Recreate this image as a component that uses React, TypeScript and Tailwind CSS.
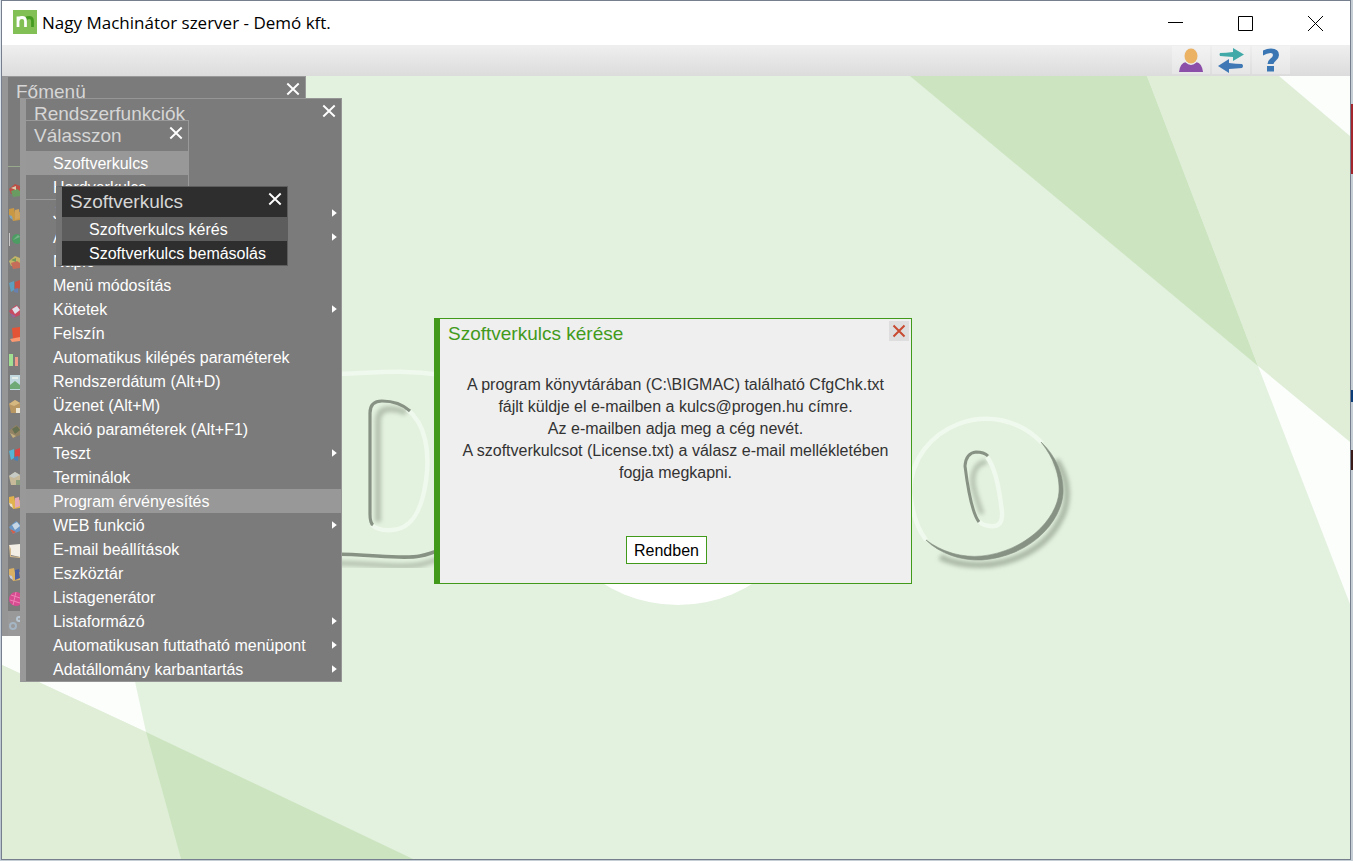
import React from "react";

type Item = { label: string; sub?: boolean; active?: boolean };

const systemItems: Item[] = [
  { label: "Jogosultságok", sub: true },
  { label: "Adatmentés", sub: true },
  { label: "Napló" },
  { label: "Menü módosítás" },
  { label: "Kötetek", sub: true },
  { label: "Felszín" },
  { label: "Automatikus kilépés paraméterek" },
  { label: "Rendszerdátum (Alt+D)" },
  { label: "Üzenet (Alt+M)" },
  { label: "Akció paraméterek (Alt+F1)" },
  { label: "Teszt", sub: true },
  { label: "Terminálok" },
  { label: "Program érvényesítés", active: true },
  { label: "WEB funkció", sub: true },
  { label: "E-mail beállítások" },
  { label: "Eszköztár" },
  { label: "Listagenerátor" },
  { label: "Listaformázó", sub: true },
  { label: "Automatikusan futtatható menüpont", sub: true },
  { label: "Adatállomány karbantartás", sub: true },
];

function CloseIcon() {
  return (
    <svg width="14" height="14" viewBox="0 0 14 14" fill="none" stroke="white" strokeWidth="1.9" aria-hidden="true">
      <path d="M1.3 1.5 12.7 12.5M12.7 1.5 1.3 12.5" />
    </svg>
  );
}

function MenuHeader({ title }: { title: string }) {
  return (
    <header className="flex h-[30px] items-start justify-between pr-[5px] pl-2 text-[19px] leading-[30px] text-[#d6d6d6]">
      <h2>{title}</h2>
      <button type="button" aria-label={`${title} bezárása`} className="mt-[5px] flex">
        <CloseIcon />
      </button>
    </header>
  );
}

function MenuRow({ item, tone }: { item: Item; tone?: string }) {
  return (
    <li>
      <button
        type="button"
        className={`flex h-6 w-full items-center justify-between pr-1 pl-[27px] text-left text-base leading-6 whitespace-nowrap text-white ${tone ?? (item.active ? "bg-[#989898]" : "")}`}
      >
        <span className="pt-[2px]">{item.label}</span>
        {item.sub && (
          <svg width="5" height="8" viewBox="0 0 5 8" fill="white" aria-hidden="true">
            <path d="M0 0.3 4.8 4 0 7.7Z" />
          </svg>
        )}
      </button>
    </li>
  );
}

function Wallpaper() {
  return (
    <svg className="absolute inset-0 h-full w-full" viewBox="0 0 1348 783" preserveAspectRatio="none" aria-hidden="true">
      <defs>
        <filter id="soft" x="-20%" y="-20%" width="140%" height="140%">
          <feGaussianBlur stdDeviation="2.2" />
        </filter>
      </defs>
      <rect width="1348" height="783" fill="#e3f1df" />
      <path d="M908 0H1145L1256 290Z" fill="#cce5c0" />
      <path d="M1145 0H1277L1348 60V366L1256 290Z" fill="#e0eed8" />
      <path d="M1277 0H1348V60Z" fill="#fbfefb" />
      <path d="M1256 290 1348 366V528Z" fill="#fcfefc" />
      <path d="M0 500H110L144 656 0 589Z" fill="#fcfefb" />
      <path d="M0 589 144 656 179 783H0Z" fill="#e0eed8" />
      <path d="M144 656 411 783H179Z" fill="#cce5c0" />
      <circle cx="676" cy="387" r="142" fill="white" />

      <g fill="none">
        <path d="M330 487C370 487 400 493 421 488Q432 485 445 480" stroke="#b3c1ae" strokeWidth="5" filter="url(#soft)" />
        <path d="M330 298C370 297 400 293 440 299" stroke="#f0f9ed" strokeWidth="4.5" />
        <path d="M330 478C370 478 400 484 418 480Q428 478 440 473" stroke="#879284" strokeWidth="3.6" />
        <path d="M376 446V346Q376 333 387 333Q398 333 404 337" stroke="#b3c1ae" strokeWidth="6" filter="url(#soft)" />
        <path d="M405 333C424 348 428 376 424 405C419 440 407 453 390 454Q376 455 370 449" stroke="#f0f9ed" strokeWidth="4.5" />
        <path d="M371 449Q368 447 368 438V337Q368 325 380 325Q397 325 408 335" stroke="#879284" strokeWidth="3.2" />

        <path d="M1054 384C1068 404 1068 428 1057 446C1042 474 1008 489 978 489C960 489 948 486 938 481" stroke="#a9b7a4" strokeWidth="6" filter="url(#soft)" />
        <path d="M1040 367C992 317 909 350 908 416Q911 447 924 464" stroke="#f0f9ed" strokeWidth="4.5" />
        <path d="M1039 366C1056 382 1062 402 1061 418C1059 445 1030 480 980 484C960 485 938 478 924 464C940 476 960 482 980 480C1024 475 1055 443 1057 416C1058 400 1052 382 1039 366Z" fill="#879284" stroke="#879284" strokeWidth=".6" />
        <path d="M980 438C972 416 968 404 973 394Q977 386 985 386" stroke="#b3c1ae" strokeWidth="5" filter="url(#soft)" />
        <path d="M985 381C994 392 998 418 1000 436Q1001 452 988 450Q979 449 977 445" stroke="#f0f9ed" strokeWidth="4.5" />
        <path d="M977 446C970 437 965 406 963 390Q964 377 974 376Q982 376 986 380" stroke="#879284" strokeWidth="3" />
      </g>
    </svg>
  );
}

function MainMenuIcons() {
  const tints: [string, string, string][] = [
    ["#bd4e46", "#6a9c62", "#d7cbb0"],
    ["#c99845", "#d0a35c", "#7da3bd"],
    ["#c8c8c8", "#4d9c63", "#79b18a"],
    ["#c4b568", "#c66d5a", "#72985c"],
    ["#5e9fc0", "#c95245", "#6780ad"],
    ["#c74b61", "#dde0e8", "#8c6b9a"],
    ["#f0805d", "#e35436", "#fa9871"],
    ["#a1e092", "#ef9b89", "#9bd88c"],
    ["#c2d8df", "#6ea976", "#e6eeea"],
    ["#b99763", "#d5b780", "#eee6d5"],
    ["#938365", "#667052", "#c0ad80"],
    ["#56b5d6", "#d94444", "#477fb6"],
    ["#c6ba9a", "#c6cbc5", "#899f7d"],
    ["#e0b34e", "#e3a8b5", "#eee2cd"],
    ["#6996c4", "#c6d6e5", "#d45f47"],
    ["#e5d7b5", "#f2eee5", "#d4b98c"],
    ["#d9b064", "#4c5f9d", "#c7cbe0"],
    ["#d74b91", "#c04583", "#ee83b5"],
    ["#a5b5c3", "#909eb0", "#b7c6d2"],
  ];
  const kinds = [0, 1, 2, 0, 3, 4, 5, 6, 7, 8, 4, 3, 8, 1, 4, 11, 1, 9, 10];
  return (
    <ul className="absolute top-[102px] left-0 flex flex-col">
      {tints.map(([a, b, c], i) => (
        <li key={i} className="h-6">
          <svg width="12" height="24" viewBox="0 0 12 24" aria-hidden="true">
            {kinds[i] === 0 && <><path d="M1 10 7 5 12 7V12L3 15Z" fill={a} /><path d="M3 12 9 10 12 12V17L5 18Z" fill={b} /><path d="M3 9 8 7V11Z" fill={c} /></>}
            {kinds[i] === 1 && <><path d="M1 6 6 5 7 10 12 9V17L5 18 3 13 1 12Z" fill={a} /><path d="M7 7 11 6 12 15 7 17Z" fill={b} /><path d="M1 12 4 13 5 17 2 15Z" fill={c} /></>}
            {kinds[i] === 2 && <><path d="M1 6H2V19H1Z" fill={a} /><circle cx="9" cy="12" r="5" fill={b} /><path d="M5 13 10 8 12 10Z" fill={c} /></>}
            {kinds[i] === 3 && <><path d="M1 8 6 6V15L3 17Z" fill={a} /><path d="M7 7 12 5V13L7 15Z" fill={b} /><path d="M6 14 10 13V18L6 17Z" fill={c} /></>}
            {kinds[i] === 4 && <><path d="M1 12 8 6 12 9V16L5 19Z" fill={a} /><path d="M4 10 9 7 12 11 7 15Z" fill={b} /><path d="M2 14 8 17 5 19Z" fill={c} /></>}
            {kinds[i] === 5 && <><path d="M4 5 12 4V16H5Z" fill={b} /><path d="M2 16 12 14V18L4 19Z" fill={c} /></>}
            {kinds[i] === 6 && <><path d="M1 7H5V19H1Z" fill={a} /><path d="M7 10H10V19H7Z" fill={b} /></>}
            {kinds[i] === 7 && <><path d="M2 4H12V19H2Z" fill={a} /><path d="M2 14 7 10 12 14V18H2Z" fill={b} /><path d="M4 6H10V8H4Z" fill={c} /></>}
            {kinds[i] === 8 && <><path d="M1 9 7 5 12 8V18L3 18Z" fill={a} /><path d="M1 9 6 11 12 8 7 5Z" fill={b} /><path d="M8 13H12V18H8Z" fill={c} /></>}
            {kinds[i] === 9 && <><circle cx="8" cy="12" r="7" fill={a} /><path d="M3 8 12 11M2 13 12 16M8 5 5 18" stroke={c} fill="none" /></>}
            {kinds[i] === 10 && <><circle cx="5" cy="15" r="3" stroke={a} strokeWidth="2" fill="none" /><circle cx="11" cy="8" r="2" stroke={c} strokeWidth="2" fill="none" /></>}
            {kinds[i] === 11 && <><path d="M1 6 12 5V18L3 16Z" fill={b} /><path d="M1 6 3 10V17L12 18V19L2 18Z" fill={c} /></>}
          </svg>
        </li>
      ))}
    </ul>
  );
}

export default function App() {
  return (
    <div className="flex h-screen min-h-[720px] overflow-hidden bg-[#c5ced5] pb-px font-['Liberation_Sans',Arial,sans-serif]">
      <div className="w-px shrink-0 bg-linear-to-b from-[#dfe6ee] to-[#b9c4d0]" />
      <div className="flex min-w-0 flex-1 flex-col border border-[#757f8d] bg-white">
        <header className="flex h-11 shrink-0 items-center justify-between pl-[11px]">
          <div className="flex items-center gap-[5px]">
            <svg width="24" height="24" viewBox="0 0 24 24" fill="none" className="-translate-y-px" aria-hidden="true">
              <path d="M0 0H24V24H0Z" fill="#82bf55" />
              <path d="M12.500 17V11Q12.500 7.500 16 7.500Q19.500 7.500 19.500 11V17" stroke="#459b22" strokeWidth="2.800" />
              <path d="M5 17V6.500M5 11Q5.500 7.500 9 7.500Q12.500 7.500 12.500 11V17" stroke="white" strokeWidth="2.800" />
            </svg>
            <h1 className="font-['Open_Sans','Noto_Sans',sans-serif] text-[17px] leading-6 text-black">Nagy Machinátor szerver - Demó kft.</h1>
          </div>
          <div className="flex">
            <button type="button" aria-label="Kis méret" className="flex h-11 w-[70px] items-center justify-center">
              <svg width="15" height="15" viewBox="0 0 15 15" stroke="black" aria-hidden="true"><path d="M0 6.5H15" /></svg>
            </button>
            <button type="button" aria-label="Teljes méret" className="flex h-11 w-[70px] items-center justify-center">
              <svg width="15" height="15" viewBox="0 0 15 15" stroke="black" fill="none" aria-hidden="true"><path d="M.5.5H14.5V14.5H.5Z" /></svg>
            </button>
            <button type="button" aria-label="Bezárás" className="flex h-11 w-[70px] items-center justify-center">
              <svg width="15" height="15" viewBox="0 0 15 15" stroke="black" aria-hidden="true"><path d="M0 0 15 15M15 0 0 15" /></svg>
            </button>
          </div>
        </header>

        <div className="flex h-[31px] shrink-0 justify-end gap-[2px] bg-linear-to-b from-[#efefef] to-[#dcdcdc] pt-px pr-[60px]">
          <button type="button" aria-label="Felhasználó" className="flex h-7 w-[38px] items-center justify-center bg-linear-to-b from-[#f3f3f3] to-[#e6e6e6]">
            <svg width="24" height="24" viewBox="0 0 24 24" aria-hidden="true">
              <path d="M0 24Q1 15 7 14H17Q23 15 24 24Z" fill="#8b4ea9" />
              <ellipse cx="12" cy="8.500" rx="7.500" ry="8.500" fill="#ececec" />
              <ellipse cx="12" cy="8" rx="6.500" ry="7.500" fill="#ebb263" />
            </svg>
          </button>
          <button type="button" aria-label="Adatcsere" className="flex h-7 w-[38px] items-center justify-center bg-linear-to-b from-[#f3f3f3] to-[#e6e6e6]">
            <svg width="26" height="26" viewBox="0 0 26 26" aria-hidden="true">
              <path d="M2 6Q8 6 15 5V1L26 7.5 15 14V10Q8 9.500 2 9Q1 7.500 2 6Z" fill="#41aaa8" />
              <path d="M24 17Q18 17 11 16V12L0 19 11 26V22Q18 21.500 24 21Q26 19 24 17Z" fill="#3f78b5" />
            </svg>
          </button>
          <button type="button" aria-label="Súgó" className="flex h-7 w-[38px] items-center justify-center bg-linear-to-b from-[#f3f3f3] to-[#e6e6e6]">
            <svg width="18" height="24" viewBox="0 0 18 24" aria-hidden="true">
              <path d="M1 2.500Q5 .5 9 .5Q17 .5 17 7Q17 10 14 12.500Q11.500 14.500 11.500 16H5.500Q5.500 13 8 11Q11 9 11 7Q11 5 8.500 5Q5 5 1 7.500ZM5 18H12V23.500H5Z" fill="#3b76b4" />
            </svg>
          </button>
        </div>

        <main className="relative min-h-0 flex-1 overflow-hidden">
          <Wallpaper />

          <section aria-label="Főmenü" className="absolute top-0 left-0 h-[560px] w-[304px] border-t border-r border-[#999] border-l-[6px] border-l-[#969696] bg-[#7b7b7b]">
            <MenuHeader title="Főmenü" />
            <div className="mt-[59px] w-3 border-t border-[#97aa8c]" />
            <div className="absolute bottom-0 left-0 h-[25px] w-3 bg-[#999]" />
            <MainMenuIcons />
          </section>

          <section aria-label="Rendszerfunkciók" className="absolute top-[22px] left-[18px] w-[322px] border-t border-r border-b border-[#969696] border-l-[6px] border-l-[#999] bg-[#7b7b7b]">
            <MenuHeader title="Rendszerfunkciók" />
            <div className="h-[72px]" />
            <ul>{systemItems.map((item) => <MenuRow key={item.label} item={item} />)}</ul>
          </section>

          <section aria-label="Válasszon" className="absolute top-[44px] left-6 w-[163px] border-t border-r border-b border-[#999] bg-[#7b7b7b]">
            <MenuHeader title="Válasszon" />
            <ul>
              <MenuRow item={{ label: "Szoftverkulcs" }} tone="bg-[#989898]" />
              <MenuRow item={{ label: "Hardverkulcs" }} />
            </ul>
          </section>

          <section aria-label="Szoftverkulcs" className="absolute top-[110px] left-[54px] w-[232px] border-t border-r border-b border-[#5d5d5d] border-l-[6px] border-l-[#747474] bg-[#2e2e2e]">
            <MenuHeader title="Szoftverkulcs" />
            <ul>
              <MenuRow item={{ label: "Szoftverkulcs kérés" }} tone="bg-[#5d5d5d]" />
              <MenuRow item={{ label: "Szoftverkulcs bemásolás" }} />
            </ul>
          </section>

          <div className="absolute inset-x-0 top-[242px] flex justify-center">
            <section role="dialog" aria-labelledby="dialog-title" className="mr-[6px] flex h-[266px] w-[478px] flex-col border border-[#429a1b] border-l-[6px] bg-[#efefef]">
              <header className="flex items-start justify-between pr-[2px] pl-2">
                <h2 id="dialog-title" className="text-[19px] leading-[30px] text-[#429a1b]">Szoftverkulcs kérése</h2>
                <button type="button" aria-label="Párbeszéd bezárása" className="mt-[2px] flex size-5 items-center justify-center bg-[#dedede]">
                  <svg width="14" height="14" viewBox="0 0 14 14" stroke="#c84a30" strokeWidth="2" aria-hidden="true"><path d="M1.500 1.500 12.500 12.500M12.500 1.500 1.500 12.500" /></svg>
                </button>
              </header>
              <p className="mt-[25px] text-center text-base leading-[22px] text-[#333]">
                A program könyvtárában (C:\BIGMAC) található CfgChk.txt<br />
                fájlt küldje el e-mailben a kulcs@progen.hu címre.<br />
                Az e-mailben adja meg a cég nevét.<br />
                A szoftverkulcsot (License.txt) a válasz e-mail mellékletében<br />
                fogja megkapni.
              </p>
              <div className="mt-[52px] flex justify-center pr-[18px]">
                <button type="button" className="h-7 w-[81px] border border-[#429a1b] bg-white pt-px text-base text-black">Rendben</button>
              </div>
            </section>
          </div>
        </main>
      </div>
      <div className="flex w-[2px] shrink-0 flex-col">
        <div className="h-[104px]" />
        <div className="h-[70px] bg-[#a4262c]" />
        <div className="h-[216px]" />
        <div className="h-3 bg-[#0b3d78]" />
        <div className="h-12" />
        <div className="h-5 bg-[#3a1a18]" />
      </div>
    </div>
  );
}
